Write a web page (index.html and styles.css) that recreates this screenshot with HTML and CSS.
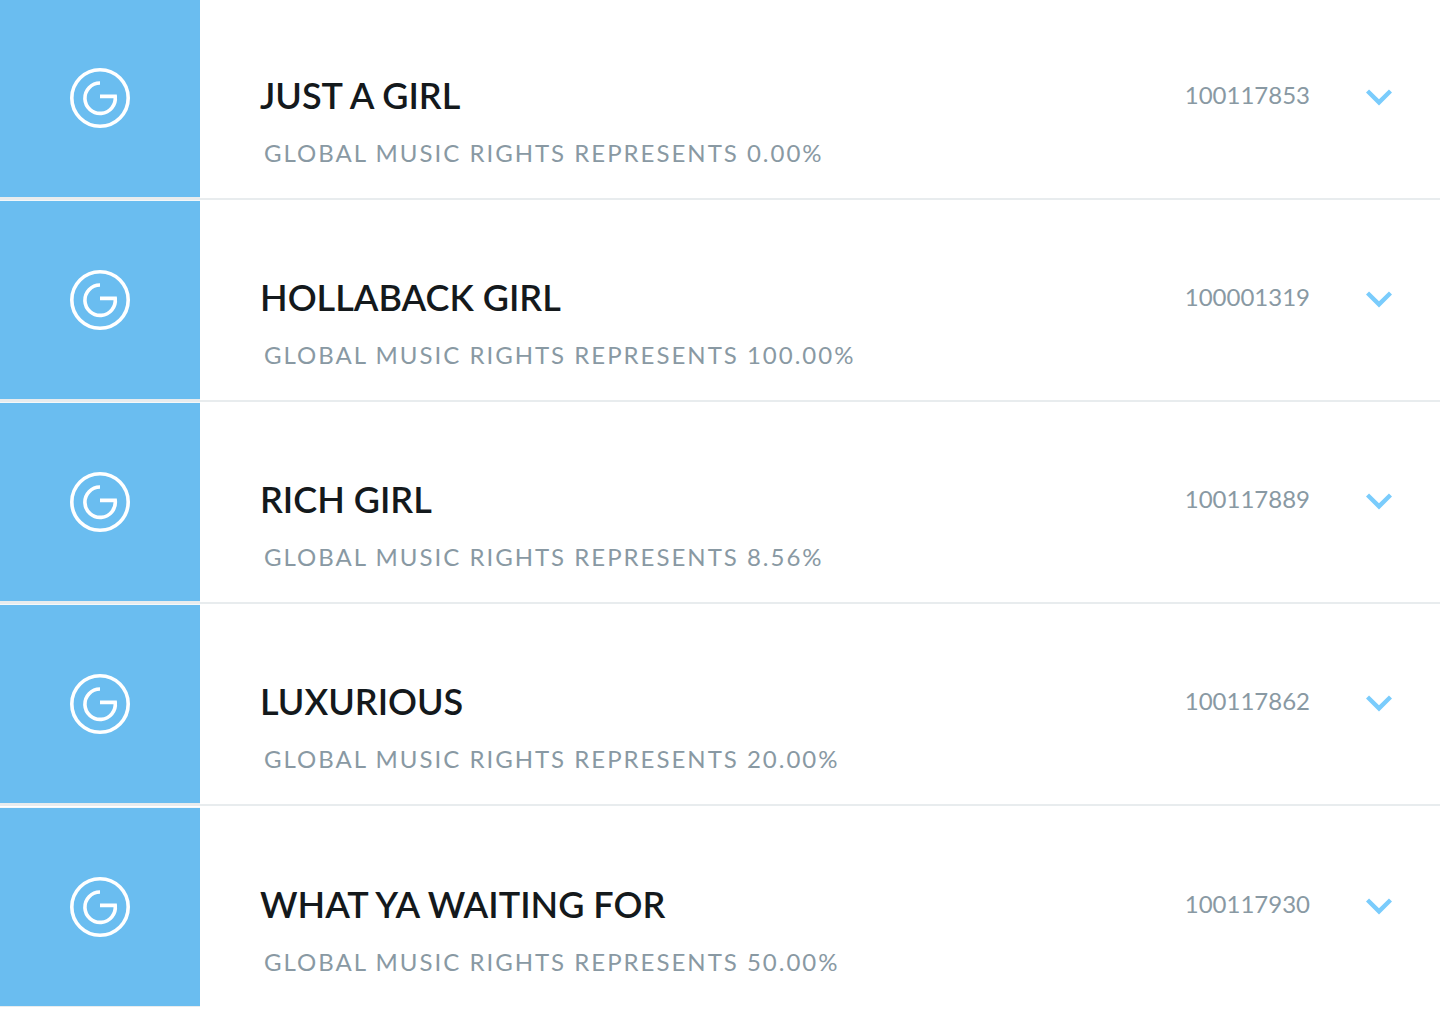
FILE: index.html
```
<!DOCTYPE html>
<html lang="en">
<head>
	<title>Global Music Rights - Catalog</title>
	<meta charset="utf-8">
	<meta name="viewport" content="width=device-width, initial-scale=1">
	<link rel="stylesheet" href="styles.css">
</head>
<body>
	<!-- shared icons -->
	<svg class="sprite" aria-hidden="true">
		<symbol id="logo" viewBox="0 0 60 60">
			<circle cx="30" cy="30" r="28.2" />
			<path d="M30 15A15.2 15.2 0 1 0 45.2 28.4H30" />
		</symbol>
		<symbol id="arrow" viewBox="0 0 26 17">
			<path d="M1.5 2L13 13.3L24.5 2" />
		</symbol>
	</svg>
	<ul class="results">
		<li class="song">
			<div class="badge"><svg class="logo"><use href="#logo" /></svg></div>
			<div class="info">
				<h2 class="title">JUST A GIRL</h2>
				<p class="share">GLOBAL MUSIC RIGHTS REPRESENTS 0.00%</p>
			</div>
			<span class="number">100117853</span>
			<button class="toggle" type="button" aria-label="Show details"><svg class="arrow"><use href="#arrow" /></svg></button>
		</li>
		<li class="song">
			<div class="badge"><svg class="logo"><use href="#logo" /></svg></div>
			<div class="info">
				<h2 class="title">HOLLABACK GIRL</h2>
				<p class="share">GLOBAL MUSIC RIGHTS REPRESENTS 100.00%</p>
			</div>
			<span class="number">100001319</span>
			<button class="toggle" type="button" aria-label="Show details"><svg class="arrow"><use href="#arrow" /></svg></button>
		</li>
		<li class="song">
			<div class="badge"><svg class="logo"><use href="#logo" /></svg></div>
			<div class="info">
				<h2 class="title">RICH GIRL</h2>
				<p class="share">GLOBAL MUSIC RIGHTS REPRESENTS 8.56%</p>
			</div>
			<span class="number">100117889</span>
			<button class="toggle" type="button" aria-label="Show details"><svg class="arrow"><use href="#arrow" /></svg></button>
		</li>
		<li class="song">
			<div class="badge"><svg class="logo"><use href="#logo" /></svg></div>
			<div class="info">
				<h2 class="title">LUXURIOUS</h2>
				<p class="share">GLOBAL MUSIC RIGHTS REPRESENTS 20.00%</p>
			</div>
			<span class="number">100117862</span>
			<button class="toggle" type="button" aria-label="Show details"><svg class="arrow"><use href="#arrow" /></svg></button>
		</li>
		<li class="song">
			<div class="badge"><svg class="logo"><use href="#logo" /></svg></div>
			<div class="info">
				<h2 class="title">WHAT YA WAITING FOR</h2>
				<p class="share">GLOBAL MUSIC RIGHTS REPRESENTS 50.00%</p>
			</div>
			<span class="number">100117930</span>
			<button class="toggle" type="button" aria-label="Show details"><svg class="arrow"><use href="#arrow" /></svg></button>
		</li>
	</ul>
</body>
</html>
```
FILE: styles.css
```
* {
	box-sizing: border-box;
}

body {
	margin: 0;
	background-color: #fff;
	font-family: Lato, "Open Sans", sans-serif;
}

.sprite {
	display: none;
}

.results {
	list-style: none;
	margin: -2px 0 0;
	padding: 0;
}

.song {
	display: flex;
	align-items: flex-start;
	border-bottom: 2px solid #e8ecee;
}

.song:last-child {
	border-bottom: none;
	padding-top: 1px;
}

/* blue block on the left, with a light line above and below */
.badge {
	display: flex;
	align-items: center;
	justify-content: center;
	align-self: stretch;
	width: 200px;
	flex: none;
	background-color: #6abdf0;
	border-top: 1px solid #f4f8fa;
	border-bottom: 1px solid #e8ecee;
}

.logo {
	width: 60px;
	height: 60px;
	fill: none;
	stroke: #fff;
	stroke-width: 3.6;
}

.info {
	flex: 1;
	padding: 75px 20px 29px 60px;
}

.title {
	margin: 0;
	font-size: 36px;
	line-height: 44px;
	font-weight: 600;
	color: #14191c;
}

.share {
	margin: 20px 0 0 4px;
	font-size: 24px;
	line-height: 32px;
	letter-spacing: 2px;
	color: #8999a3;
}

.number {
	padding-top: 75px;
	font-size: 24px;
	line-height: 44px;
	color: #8999a3;
}

.toggle {
	display: flex;
	align-items: center;
	justify-content: center;
	width: 122px;
	height: 44px;
	margin: 77px 0 0 8px;
	padding: 0;
	border: none;
	background: none;
	cursor: pointer;
}

.arrow {
	width: 26px;
	height: 17px;
	fill: none;
	stroke: #7accfc;
	stroke-width: 4.4;
}
```
